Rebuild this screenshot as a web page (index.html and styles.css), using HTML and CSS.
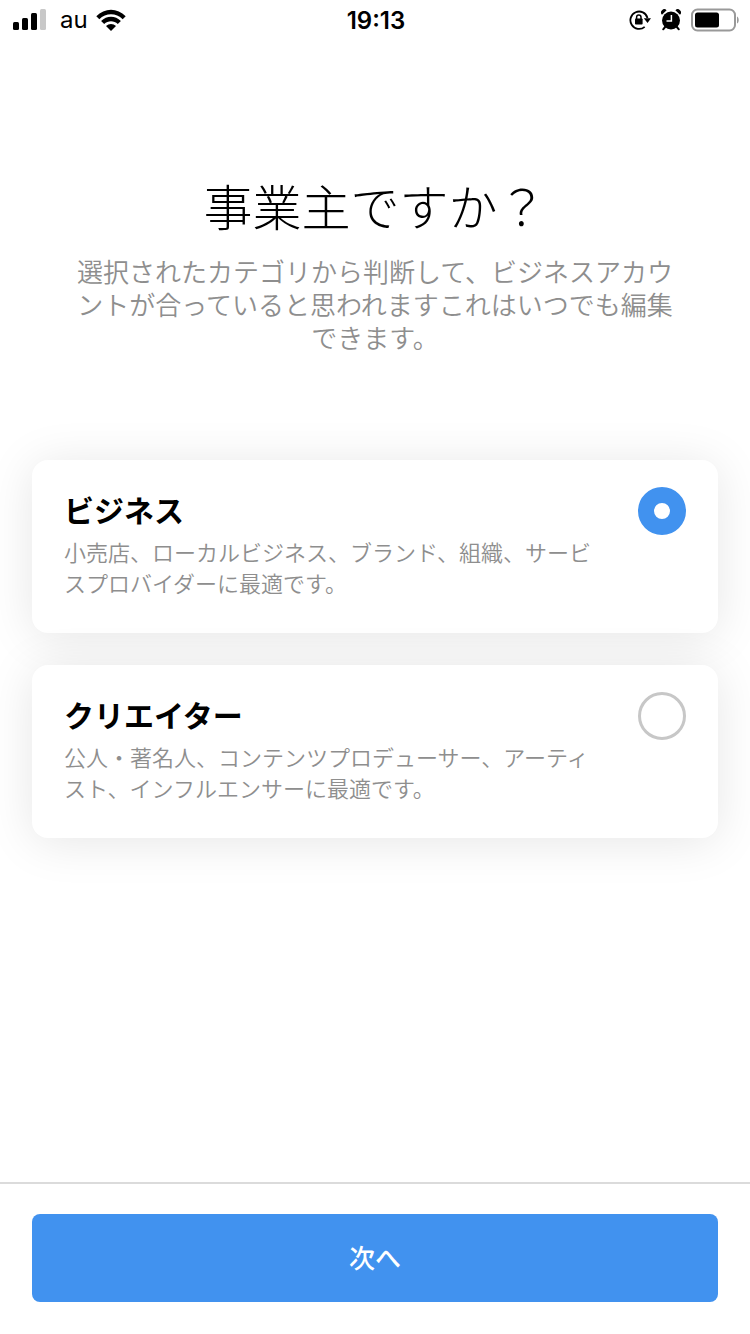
FILE: index.html
```html
<!DOCTYPE html>
<html lang="ja">
<head>
<meta charset="utf-8">
<meta name="viewport" content="width=device-width, initial-scale=1">
<title>事業主ですか？</title>
<link rel="stylesheet" href="styles.css">
</head>
<body>
<div class="screen">
  <header class="status-bar">
    <div class="status-group">
      <svg class="icon-signal" width="34" height="22" viewBox="0 0 34 22" aria-hidden="true">
        <rect x="0" y="13" width="6" height="8" rx="1.5"/>
        <rect x="9" y="9" width="6" height="12" rx="1.5"/>
        <rect x="18" y="4" width="6" height="17" rx="1.5"/>
        <rect x="27" y="0" width="6" height="21" rx="1.5" fill="#c8c8c8"/>
      </svg>
      <span class="carrier">au</span>
      <svg class="icon-wifi" width="30" height="22" viewBox="0 0 30 22" aria-hidden="true">
        <path d="M0.3 7.2C8.5-1.5 21.5-1.5 29.7 7.2L26.7 10.200C20.200 3.500 9.800 3.500 3.300 10.200Z"/>
        <path d="M5.100 12C10.700 6.300 19.300 6.300 24.900 12L21.800 15.100C18 11.300 12 11.300 8.200 15.100Z"/>
        <path d="M10 17C12.900 14.200 17.100 14.200 20 17L15 22Z"/>
      </svg>
    </div>
    <time class="clock">19:13</time>
    <div class="status-group status-right">
      <svg width="22" height="22" viewBox="0 0 22 22" aria-hidden="true">
        <path d="M15.700 17.900A8.700 8.700 0 1 1 18.500 9" fill="none" stroke="#000" stroke-width="1.800"/>
        <path d="M14.800 9.200H22L18.500 14Z"/>
        <rect x="6" y="9.500" width="7.600" height="6" rx="0.800"/>
        <path d="M7.600 10V8.200a2.200 2.200 0 0 1 4.400 0V10" fill="none" stroke="#000" stroke-width="1.500"/>
      </svg>
      <svg width="20" height="22" viewBox="0 0 20 22" aria-hidden="true">
        <circle cx="10" cy="11.500" r="9"/>
        <path d="M1 5.700A3 3 0 0 1 5.600 1.200ZM19 5.700A3 3 0 0 0 14.400 1.200Z"/>
        <path d="M4.500 17.500L2.200 20.300M15.500 17.500L17.800 20.300" stroke="#000" stroke-width="2" stroke-linecap="round"/>
        <path d="M10.400 6V12H5.500" fill="none" stroke="#fff" stroke-width="1.500"/>
      </svg>
      <svg width="48" height="24" viewBox="0 0 48 24" aria-hidden="true">
        <rect x="1" y="1.500" width="43" height="21" rx="5.500" fill="none" stroke="#999" stroke-width="2"/>
        <rect x="4" y="4.500" width="24" height="15" rx="2.500"/>
        <path d="M46 8.500C48.300 9.500 48.300 14.500 46 15.500Z" fill="#999"/>
      </svg>
    </div>
  </header>

  <main class="content">
    <h1 class="title">事業主ですか？</h1>
    <p class="lead">選択されたカテゴリから判断して、ビジネスアカウントが合っていると思われますこれはいつでも編集できます。</p>
    <form class="options" id="account-form">
      <label class="card" for="business">
        <span class="card-text">
          <span class="card-title">ビジネス</span>
          <span class="card-desc">小売店、ローカルビジネス、ブランド、組織、サービスプロバイダーに最適です。</span>
        </span>
        <input class="radio" type="radio" id="business" name="account" value="business" checked>
      </label>
      <label class="card" for="creator">
        <span class="card-text">
          <span class="card-title">クリエイター</span>
          <span class="card-desc">公人・著名人、コンテンツプロデューサー、アーティスト、インフルエンサーに最適です。</span>
        </span>
        <input class="radio" type="radio" id="creator" name="account" value="creator">
      </label>
    </form>
  </main>

  <footer class="footer">
    <button class="next" type="submit" form="account-form">次へ</button>
  </footer>
</div>
</body>
</html>
```
FILE: styles.css
```css
* {
  box-sizing: border-box;
}

body {
  margin: 0;
  background: #fff;
  color: #000;
  font-family: "Noto Sans CJK JP", sans-serif;
}

.screen {
  display: flex;
  flex-direction: column;
  min-height: 100vh;
}

.status-bar {
  display: grid;
  grid-template-columns: 1fr auto 1fr;
  align-items: center;
  height: 40px;
  padding: 0 11px 0 13px;
  font-family: Inter, sans-serif;
}

.status-group {
  display: flex;
  align-items: center;
}

.status-right {
  justify-content: flex-end;
  gap: 10px;
}

.carrier {
  margin: 0 8px 0 13px;
  font-size: 24px;
  line-height: 40px;
}

.clock {
  padding-top: 2px;
  font-size: 24px;
  font-weight: 600;
  line-height: 38px;
}

.content {
  flex: 1;
  padding: 136px 32px 32px;
}

.title {
  margin: 0;
  font-size: 49px;
  font-weight: 300;
  line-height: 58px;
  text-align: center;
}

.lead {
  margin: 20px 38px 0;
  color: #8e8e8e;
  font-size: 26px;
  font-weight: 350;
  line-height: 33px;
  text-align: center;
}

.options {
  display: grid;
  gap: 32px;
  margin-top: 107px;
}

.card {
  display: flex;
  align-items: flex-start;
  gap: 32px;
  padding: 27px 32px 35px;
  border-radius: 16px;
  background: #fff;
  box-shadow: 0 4px 48px rgba(0, 0, 0, 0.1);
}

.card-text {
  flex: 1;
}

.card-title,
.card-desc {
  display: block;
}

.card-title {
  font-size: 30px;
  font-weight: 700;
  line-height: 44px;
}

.card-desc {
  margin-top: 5px;
  color: #8e8e8e;
  font-size: 22px;
  font-weight: 350;
  line-height: 31px;
}

.radio {
  flex: none;
  width: 48px;
  height: 48px;
  margin: 0;
  border: 3px solid #c7c7c7;
  border-radius: 50%;
  background: #fff;
  appearance: none;
}

.radio:checked {
  border: 16px solid #4192ef;
}

.footer {
  padding: 30px 32px 32px;
  border-top: 2px solid #dbdbdb;
}

.next {
  display: block;
  width: 100%;
  height: 88px;
  padding: 0 0 4px;
  border: 0;
  border-radius: 8px;
  background: #4192ef;
  color: #fff;
  font-family: inherit;
  font-size: 26px;
  font-weight: 500;
}
```
